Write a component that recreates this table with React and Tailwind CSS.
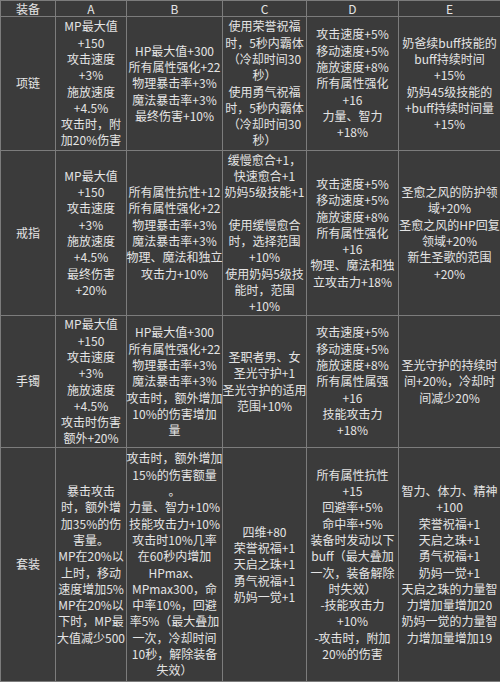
const rows = [
  {
    name: '项链',
    h: 'h-[134px]',
    cells: [
      ['MP最大值', '+150', '攻击速度', '+3%', '施放速度', '+4.5%', '攻击时，附', '加20%伤害'],
      ['HP最大值+300', '所有属性强化+22', '物理暴击率+3%', '魔法暴击率+3%', '最终伤害+10%'],
      ['使用荣誉祝福', '时，5秒内霸体', '（冷却时间30', '秒）', '使用勇气祝福', '时，5秒内霸体', '（冷却时间30', '秒）'],
      ['攻击速度+5%', '移动速度+5%', '施放速度+8%', '所有属性强化', '+16', '力量、智力', '+18%'],
      ['奶爸续buff技能的', 'buff持续时间', '+15%', '奶妈45级技能的', '+buff持续时间量', '+15%'],
    ],
  },
  {
    name: '戒指',
    h: 'h-[165px]',
    cells: [
      ['MP最大值', '+150', '攻击速度', '+3%', '施放速度', '+4.5%', '最终伤害', '+20%'],
      ['所有属性抗性+12', '所有属性强化+22', '物理暴击率+3%', '魔法暴击率+3%', '物理、魔法和独立', '攻击力+10%'],
      ['缓慢愈合+1，', '快速愈合+1', '奶妈5级技能+1', '', '使用缓慢愈合', '时，选择范围', '+10%', '使用奶妈5级技', '能时，范围', '+10%'],
      ['攻击速度+5%', '移动速度+5%', '施放速度+8%', '所有属性强化', '+16', '物理、魔法和独', '立攻击力+18%'],
      ['圣愈之风的防护领', '域+20%', '圣愈之风的HP回复', '领域+20%', '新生圣歌的范围', '+20%'],
    ],
  },
  {
    name: '手镯',
    h: 'h-[132px]',
    cells: [
      ['MP最大值', '+150', '攻击速度', '+3%', '施放速度', '+4.5%', '攻击时伤害', '额外+20%'],
      ['HP最大值+300', '所有属性强化+22', '物理暴击率+3%', '魔法暴击率+3%', '攻击时，额外增加', '10%的伤害增加', '量'],
      ['圣职者男、女', '圣光守护+1', '圣光守护的适用', '范围+10%'],
      ['攻击速度+5%', '移动速度+5%', '施放速度+8%', '所有属性属强', '+16', '技能攻击力', '+18%'],
      ['圣光守护的持续时', '间+20%，冷却时', '间减少20%'],
    ],
  },
  {
    name: '套装',
    h: 'h-[234px]',
    cells: [
      ['暴击攻击', '时，额外增', '加35%的伤', '害量。', 'MP在20%以', '上时，移动', '速度增加5%', 'MP在20%以', '下时，MP最', '大值减少500'],
      ['攻击时，额外增加', '15%的伤害额量', '。', '力量、智力+10%', '技能攻击力+10%', '攻击时10%几率', '在60秒内增加', 'HPmax、', 'MPmax300，命', '中率10%，回避', '率5%（最大叠加', '一次，冷却时间', '10秒，解除装备', '失效）'],
      ['四维+80', '荣誉祝福+1', '天启之珠+1', '勇气祝福+1', '奶妈一觉+1'],
      ['所有属性抗性', '+15', '回避率+5%', '命中率+5%', '装备时发动以下', 'buff（最大叠加', '一次，装备解除', '时失效）', '-技能攻击力', '+10%', '-攻击时，附加', '20%的伤害'],
      ['智力、体力、精神', '+100', '荣誉祝福+1', '天启之珠+1', '勇气祝福+1', '奶妈一觉+1', '天启之珠的力量智', '力增加量增加20', '奶妈一觉的力量智', '力增加量增加19'],
    ],
  },
];

const cell = 'border border-[#7c7c7c] p-0 text-center align-middle';

function Lines({ lines }) {
  return (
    <div className="flex flex-col items-center">
      {lines.map((l, i) => (
        <div key={i} className="whitespace-nowrap h-[16.3px]">
          {l}
        </div>
      ))}
    </div>
  );
}

export default function App() {
  return (
    <div
      className="w-[500px] h-[682px] bg-[#3b3b3b] text-[#e4e4e4] text-[12px] leading-[16.3px] overflow-hidden"
      style={{ fontFamily: '"Microsoft YaHei", "Noto Sans CJK SC", "Noto Sans", sans-serif' }}
    >
      <table className="table-fixed border-collapse w-[500px]">
        <colgroup>
          <col className="w-[55px]" />
          <col className="w-[71px]" />
          <col className="w-[96px]" />
          <col className="w-[84px]" />
          <col className="w-[92px]" />
          <col className="w-[102px]" />
        </colgroup>
        <thead>
          <tr className="h-[16px]">
            {['装备', 'A', 'B', 'C', 'D', 'E'].map((h) => (
              <th key={h} className={`${cell} font-normal leading-[14px] h-[16px]`}>
                {h}
              </th>
            ))}
          </tr>
        </thead>
        <tbody>
          {rows.map((r) => (
            <tr key={r.name} className={r.h}>
              <td className={cell}>{r.name}</td>
              {r.cells.map((c, i) => (
                <td key={i} className={cell}>
                  <Lines lines={c} />
                </td>
              ))}
            </tr>
          ))}
        </tbody>
      </table>
    </div>
  );
}
